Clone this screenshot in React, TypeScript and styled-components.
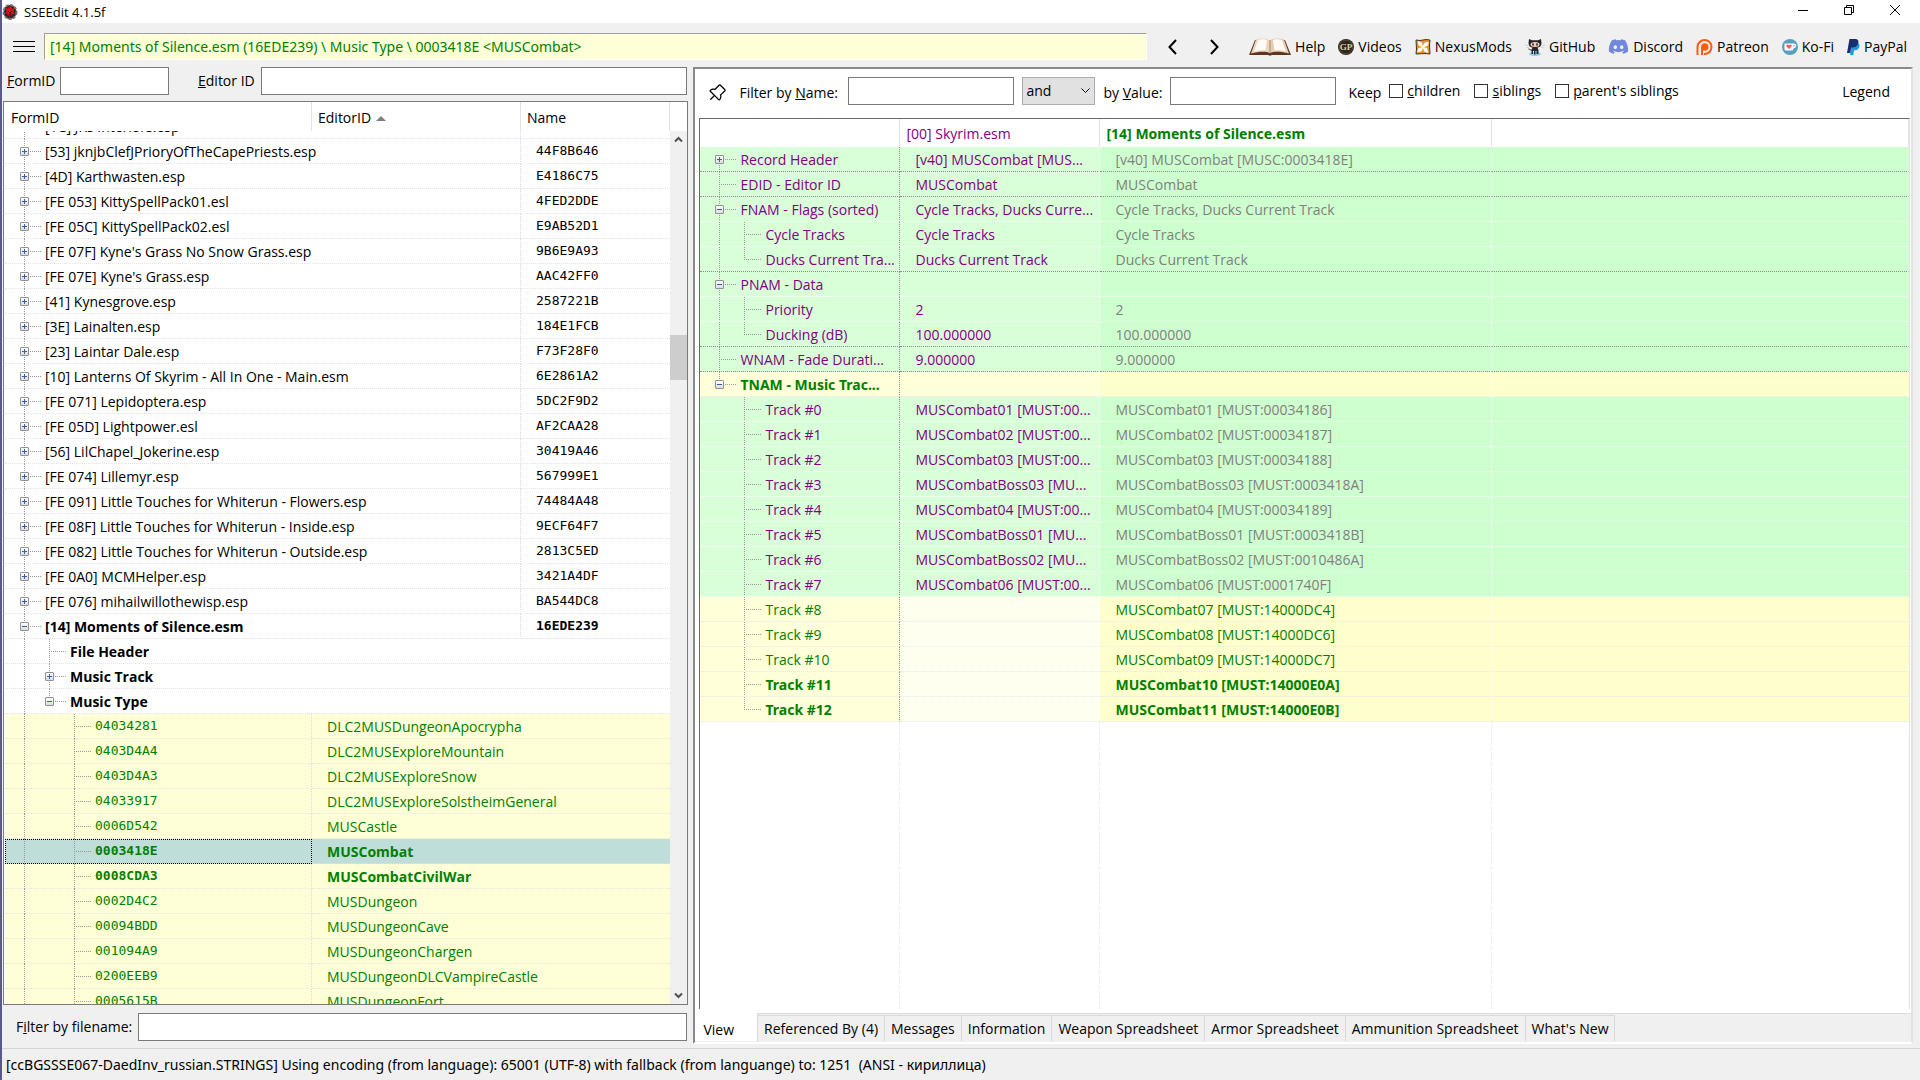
import React, { useLayoutEffect, useRef } from "react";
import styled, { createGlobalStyle, css } from "styled-components";
import { FaDiscord } from "react-icons/fa";
import { PiPushPin } from "react-icons/pi";

const UI_FONT = '"Open Sans", "Noto Sans", sans-serif';
const WIDE_FONT = '"Noto Sans", "Open Sans", sans-serif';
const MONO_FONT = '"DejaVu Sans Mono", "Liberation Mono", monospace';

const GlobalStyle = createGlobalStyle`
  * { box-sizing: border-box; }
  body { margin: 0; background: #f0f0f0; }
  button, input, select { font: inherit; color: inherit; margin: 0; }
`;

const Window = styled.div`
  display: flex;
  flex-direction: column;
  height: 100vh;
  border-left: 2px solid #5c588c;
  background: #f0f0f0;
  color: #000;
  font: 14px/20px ${UI_FONT};
  white-space: nowrap;
  overflow: hidden;
`;

/* ---------- title bar ---------- */

const TitleBar = styled.header`
  display: flex;
  align-items: center;
  height: 23px;
  padding-right: 2px;
  background: #fff;
`;
const Title = styled.h1`
  flex: 1;
  margin: 0 0 0 6px;
  font-size: 13px;
  font-weight: 400;
`;
const CaptionButton = styled.button`
  display: flex;
  align-self: flex-start;
  align-items: center;
  justify-content: center;
  width: 46px;
  height: 20px;
  padding: 0;
  border: 0;
  background: none;
`;

/* ---------- toolbar ---------- */

const Toolbar = styled.div`
  display: flex;
  align-items: center;
  height: 44px;
  padding: 3px 13px 0 10px;
`;
const IconButton = styled.button<{ $w: number }>`
  display: flex;
  flex: none;
  align-items: center;
  justify-content: center;
  width: ${(p) => p.$w}px;
  height: 24px;
  padding: 0;
  border: 0;
  background: none;
`;
const PathBox = styled.input`
  flex: 1;
  min-width: 0;
  height: 27px;
  margin: 0 16px 0 8px;
  padding: 0 5px 1px;
  border: 1px solid;
  border-color: #a0a0a0 #fff #fff #a0a0a0;
  background: #ffffd7;
  color: #008000;
  font-family: ${WIDE_FONT};
  outline: 0;
`;
const Links = styled.nav`
  display: flex;
  align-items: center;
  gap: 13px;
  margin-left: 2px;
`;
const LinkItem = styled.a`
  display: flex;
  align-items: center;
  gap: 4px;
  color: #000;
  text-decoration: none;
  svg { flex: none; display: block; }
`;

/* ---------- shared form parts ---------- */

const TextBox = styled.input<{ $w?: number }>`
  ${(p) => (p.$w ? css`width: ${p.$w}px;` : css`flex: 1; min-width: 0;`)}
  height: 28px;
  padding: 0 4px;
  border: 1px solid #7a7a7a;
  background: #fff;
  outline: 0;
`;
const FieldLabel = styled.label<{ $w?: number; $indent?: number }>`
  ${(p) => p.$w && css`width: ${p.$w}px;`}
  flex: none;
  padding-left: ${(p) => p.$indent ?? 0}px;
`;
const FilterCaption = styled(FieldLabel)`
  padding-top: 3px;
`;

/* ---------- main split ---------- */

const Main = styled.main`
  flex: 1;
  min-height: 0;
  display: grid;
  grid-template-columns: 36% minmax(0, 1fr);
`;
const LeftPane = styled.section`
  display: flex;
  flex-direction: column;
  min-height: 0;
  padding: 0 4px 0 1px;
`;
const SearchRow = styled.div`
  display: flex;
  align-items: center;
  height: 34px;
  padding: 0 1px 6px 4px;
`;
const FileFilterRow = styled(SearchRow)`
  height: 43px;
  padding: 1px 1px 0 13px;
`;
const TreeBox = styled.div`
  flex: 1;
  min-height: 0;
  display: flex;
  flex-direction: column;
  padding-left: 1px;
  border: 1px solid #7a7a7a;
  background: #fff;
`;
const TreeHead = styled.div`
  display: grid;
  grid-template-columns: 307px 209px minmax(0, 1fr);
  height: 29px;
  margin-right: 17px;
`;
const HeadButton = styled.button`
  padding: 2px 6px 0;
  border: 0;
  border-right: 1px solid #e2e2e2;
  background: none;
  text-align: left;
`;
const SortMark = styled.span`
  display: inline-block;
  margin-left: 5px;
  border: 5px solid transparent;
  border-top: 0;
  border-bottom-color: #808080;
  vertical-align: 2px;
`;
const TreeBody = styled.div`
  flex: 1;
  min-height: 0;
  display: flex;
`;
const TreeScroll = styled.div`
  flex: 1;
  min-width: 0;
  overflow: hidden;
`;
const TreeTable = styled.table`
  width: 100%;
  table-layout: fixed;
  border-collapse: separate;
  border-spacing: 0;
`;
const TreeCell = styled.td<{ $line?: boolean; $inset?: boolean; $mono?: boolean }>`
  height: 25px;
  padding: 0 0 0 ${(p) => (p.$inset ? 15 : 0)}px;
  border-bottom: 1px dotted #e4e4e4;
  ${(p) => p.$line && css`border-right: 1px dotted #d8d8e8;`}
  ${(p) => p.$inset && !p.$mono && css`padding-top: 2px;`}
  ${(p) => p.$mono && css`font-family: ${MONO_FONT}; font-size: 13px;`}
`;
const TreeRow = styled.tr<{ $record?: boolean; $selected?: boolean; $bold?: boolean }>`
  ${(p) => p.$record && css`background: #ffffd7; color: #008000;`}
  ${(p) => p.$bold && css`font-weight: 700;`}
  ${(p) => p.$selected && css`
    background: #bfdeda;
    ${TreeCell}:first-child { outline: 1px dotted #000; outline-offset: -1px; }
  `}
`;
const ScrollBar = styled.div`
  display: flex;
  flex-direction: column;
  width: 17px;
  background: #f0f0f0;
  color: #505050;
`;
const ScrollArrow = styled(IconButton)`
  height: 17px;
`;
const ScrollTrack = styled.div`
  flex: 1;
  padding-top: 187px;
`;
const ScrollThumb = styled.div`
  height: 45px;
  background: #cdcdcd;
`;

/* ---------- tree guides ---------- */

const dotsDown = "repeating-linear-gradient(to bottom, #999 0 1px, transparent 1px 2px)";
const dotsRight = "repeating-linear-gradient(to right, #999 0 1px, transparent 1px 2px)";

type Kind = "first" | "mid" | "last";

const NodeLine = styled.div`
  display: flex;
  align-items: center;
  height: 24px;
  padding-left: 7px;
`;
const Guide = styled.span<{ $on: boolean }>`
  flex: none;
  width: 25px;
  height: 25px;
  ${(p) => p.$on && css`background: ${dotsDown} 12px 0 / 1px 100% no-repeat;`}
`;
const Branch = styled.span<{ $kind: Kind }>`
  flex: none;
  display: flex;
  align-items: center;
  width: 33px;
  height: 25px;
  padding-left: 8px;
  background:
    ${dotsRight} 12px 12px / 17px 1px no-repeat,
    ${dotsDown} 12px ${(p) => (p.$kind === "first" ? "12px" : "0")} / 1px ${(p) => (p.$kind === "mid" ? "100%" : "13px")} no-repeat;
`;
const Expander = styled.button`
  display: flex;
  width: 9px;
  height: 9px;
  padding: 0;
  border: 1px solid #919191;
  border-radius: 1px;
  background: linear-gradient(#fff, #dcdcdc);
`;
const NodeText = styled.span<{ $mono?: boolean }>`
  padding-top: 2px;
  ${(p) => p.$mono && css`padding-top: 0; font-family: ${MONO_FONT}; font-size: 13px;`}
`;

function Node(props: { guides: boolean[]; kind: Kind; open?: boolean; text: string; mono?: boolean }) {
  const { guides, kind, open, text, mono } = props;
  return (
    <NodeLine>
      {guides.map((on, i) => <Guide key={i} $on={on} />)}
      <Branch $kind={kind}>
        {open !== undefined && (
          <Expander aria-label={open ? "Collapse" : "Expand"}>
            <svg width="7" height="7" viewBox="0 0 7 7" stroke="#3c5ba5">
              <path d={open ? "M1 3.5H6" : "M1 3.5H6M3.5 1V6"} />
            </svg>
          </Expander>
        )}
      </Branch>
      <NodeText $mono={mono}>{text}</NodeText>
    </NodeLine>
  );
}

/* ---------- right pane ---------- */

const RightPane = styled.section`
  display: flex;
  flex-direction: column;
  min-height: 0;
  margin: 0 7px 4px 1px;
  border: 2px solid;
  border-color: #8a8a8a #e3e3e3 #fff #8a8a8a;
`;
const ViewPage = styled.div`
  flex: 1;
  min-height: 0;
  display: flex;
  flex-direction: column;
  padding: 0 1px 4px 4px;
  background: #fff;
  border-bottom: 1px solid #d9d9d9;
`;
const FilterRow = styled.div`
  display: flex;
  align-items: center;
  height: 49px;
  padding: 0 20px 5px 6px;
`;
const PinButton = styled(IconButton)`
  margin: 4px 10px 0 0;
`;
const Combo = styled.div`
  display: grid;
  align-items: center;
  width: 73px;
  height: 28px;
  margin: 0 8px;
  border: 1px solid #adadad;
  background: #e1e1e1;
  svg { grid-area: 1 / 1; justify-self: end; margin-right: 4px; pointer-events: none; }
`;
const ComboSelect = styled.select`
  grid-area: 1 / 1;
  height: 26px;
  padding: 0 3px;
  border: 0;
  background: transparent;
  appearance: none;
`;
const Check = styled.label`
  display: flex;
  align-items: center;
  gap: 4px;
  margin-right: 14px;
`;
const CheckInput = styled.input`
  appearance: none;
  width: 14px;
  height: 14px;
  border: 1px solid #333;
  background: #fff;
`;
const Keep = styled.span`
  margin: 0 8px 0 12px;
  padding-top: 3px;
`;
const LegendButton = styled.button`
  margin-left: auto;
  padding: 2px 0 0;
  border: 0;
  background: none;
`;
const GridBox = styled.div`
  flex: 1;
  min-height: 0;
  overflow: hidden;
  border: 1px solid #696969;
  border-right-color: #e3e3e3;
  border-bottom: 0;
`;
const GridTable = styled(TreeTable)`
  height: 100%;
`;
const GridHead = styled.th<{ $tone?: string; $bold?: boolean }>`
  height: 28px;
  padding: 2px 6px 0;
  border-right: 1px solid #e2e2e2;
  color: ${(p) => p.$tone};
  ${(p) => p.$bold && css`font-family: ${WIDE_FONT};`}
  font-weight: ${(p) => (p.$bold ? 700 : 400)};
  text-align: left;
`;
type Tint = "match" | "added" | "changed";
const paleTint = { match: "#d8ffd8", added: "#ffffd9", changed: "#ffffd9" };
const fullTint = { match: "#ceffce", added: "#ffffce", changed: "#ffffce" };

const GridCell = styled.td<{ $bg: string; $line: string; $side: string; $tone?: string; $inset?: boolean }>`
  height: 25px;
  padding: ${(p) => (p.$inset ? "2px 0 0 15px" : "0")};
  overflow: hidden;
  border-right: 1px dotted ${(p) => p.$side};
  border-bottom: 1px dotted ${(p) => p.$line};
  background: ${(p) => p.$bg};
  color: ${(p) => p.$tone};
`;
const GridRow = styled.tr<{ $bold?: boolean }>`
  ${(p) => p.$bold && css`font-family: ${WIDE_FONT}; font-weight: 700;`}
`;
const FillerCell = styled.td`
  padding: 0;
  height: 100%;
  border-right: 1px dashed #ececec;
`;

const Tabs = styled.div`
  display: flex;
  height: 28px;
`;
const Tab = styled.button<{ $active?: boolean }>`
  height: 26px;
  margin-top: 1px;
  padding: 0 6px;
  border: 1px solid #d9d9d9;
  border-width: 1px 1px 0 0;
  background: #f0f0f0;
  ${(p) => p.$active && css`
    height: 28px;
    margin-top: -1px;
    padding: 5px 23px 0 8px;
    border-width: 0 1px 0 0;
    background: #fff;
  `}
`;

const StatusBar = styled.footer`
  display: flex;
  align-items: center;
  height: 32px;
  padding: 0 4px;
  border-top: 1px solid #d4d4d4;
  font-family: ${WIDE_FONT};
`;

/* ---------- data ---------- */

const files: [string, string][] = [
  ["[1C] JKs Interiors.esp", ""],
  ["[53] jknjbClefJPrioryOfTheCapePriests.esp", "44F8B646"],
  ["[4D] Karthwasten.esp", "E4186C75"],
  ["[FE 053] KittySpellPack01.esl", "4FED2DDE"],
  ["[FE 05C] KittySpellPack02.esl", "E9AB52D1"],
  ["[FE 07F] Kyne's Grass No Snow Grass.esp", "9B6E9A93"],
  ["[FE 07E] Kyne's Grass.esp", "AAC42FF0"],
  ["[41] Kynesgrove.esp", "2587221B"],
  ["[3E] Lainalten.esp", "184E1FCB"],
  ["[23] Laintar Dale.esp", "F73F28F0"],
  ["[10] Lanterns Of Skyrim - All In One - Main.esm", "6E2861A2"],
  ["[FE 071] Lepidoptera.esp", "5DC2F9D2"],
  ["[FE 05D] Lightpower.esl", "AF2CAA28"],
  ["[56] LilChapel_Jokerine.esp", "30419A46"],
  ["[FE 074] Lillemyr.esp", "567999E1"],
  ["[FE 091] Little Touches for Whiterun - Flowers.esp", "74484A48"],
  ["[FE 08F] Little Touches for Whiterun - Inside.esp", "9ECF64F7"],
  ["[FE 082] Little Touches for Whiterun - Outside.esp", "2813C5ED"],
  ["[FE 0A0] MCMHelper.esp", "3421A4DF"],
  ["[FE 076] mihailwillothewisp.esp", "BA544DC8"],
];

const groups: { text: string; kind: Kind; open?: boolean }[] = [
  { text: "File Header", kind: "mid" },
  { text: "Music Track", kind: "mid", open: false },
  { text: "Music Type", kind: "last", open: true },
];

const records: { id: string; name: string; bold?: boolean; selected?: boolean }[] = [
  { id: "04034281", name: "DLC2MUSDungeonApocrypha" },
  { id: "0403D4A4", name: "DLC2MUSExploreMountain" },
  { id: "0403D4A3", name: "DLC2MUSExploreSnow" },
  { id: "04033917", name: "DLC2MUSExploreSolstheimGeneral" },
  { id: "0006D542", name: "MUSCastle" },
  { id: "0003418E", name: "MUSCombat", bold: true, selected: true },
  { id: "0008CDA3", name: "MUSCombatCivilWar", bold: true },
  { id: "0002D4C2", name: "MUSDungeon" },
  { id: "00094BDD", name: "MUSDungeonCave" },
  { id: "001094A9", name: "MUSDungeonChargen" },
  { id: "0200EEB9", name: "MUSDungeonDLCVampireCastle" },
  { id: "0005615B", name: "MUSDungeonFort" },
];

type Field = {
  text: string; a: string; b: string; tint: Tint; kind: Kind;
  guides?: boolean[]; open?: boolean; bold?: boolean; rule?: boolean;
};
const track = (n: number, a: string, b: string, tint: Tint = "match", bold = false): Field => ({
  text: `Track #${n}`, a, b, tint, bold, kind: n === 12 ? "last" : "mid", guides: [false],
});
const fields: Field[] = [
  { text: "Record Header", a: "[v40] MUSCombat [MUS...", b: "[v40] MUSCombat [MUSC:0003418E]", tint: "match", kind: "first", open: false, rule: true },
  { text: "EDID - Editor ID", a: "MUSCombat", b: "MUSCombat", tint: "match", kind: "mid", rule: true },
  { text: "FNAM - Flags (sorted)", a: "Cycle Tracks, Ducks Curre...", b: "Cycle Tracks, Ducks Current Track", tint: "match", kind: "mid", open: true },
  { text: "Cycle Tracks", a: "Cycle Tracks", b: "Cycle Tracks", tint: "match", kind: "mid", guides: [true] },
  { text: "Ducks Current Tra...", a: "Ducks Current Track", b: "Ducks Current Track", tint: "match", kind: "last", guides: [true], rule: true },
  { text: "PNAM - Data", a: "", b: "", tint: "match", kind: "mid", open: true },
  { text: "Priority", a: "2", b: "2", tint: "match", kind: "mid", guides: [true] },
  { text: "Ducking (dB)", a: "100.000000", b: "100.000000", tint: "match", kind: "last", guides: [true], rule: true },
  { text: "WNAM - Fade Durati...", a: "9.000000", b: "9.000000", tint: "match", kind: "mid", rule: true },
  { text: "TNAM - Music Trac...", a: "", b: "", tint: "changed", kind: "last", open: true, bold: true },
  track(0, "MUSCombat01 [MUST:00...", "MUSCombat01 [MUST:00034186]"),
  track(1, "MUSCombat02 [MUST:00...", "MUSCombat02 [MUST:00034187]"),
  track(2, "MUSCombat03 [MUST:00...", "MUSCombat03 [MUST:00034188]"),
  track(3, "MUSCombatBoss03 [MU...", "MUSCombatBoss03 [MUST:0003418A]"),
  track(4, "MUSCombat04 [MUST:00...", "MUSCombat04 [MUST:00034189]"),
  track(5, "MUSCombatBoss01 [MU...", "MUSCombatBoss01 [MUST:0003418B]"),
  track(6, "MUSCombatBoss02 [MU...", "MUSCombatBoss02 [MUST:0010486A]"),
  track(7, "MUSCombat06 [MUST:00...", "MUSCombat06 [MUST:0001740F]"),
  track(8, "", "MUSCombat07 [MUST:14000DC4]", "added"),
  track(9, "", "MUSCombat08 [MUST:14000DC6]", "added"),
  track(10, "", "MUSCombat09 [MUST:14000DC7]", "added"),
  track(11, "", "MUSCombat10 [MUST:14000E0A]", "added", true),
  track(12, "", "MUSCombat11 [MUST:14000E0B]", "added", true),
];

const tabs = ["View", "Referenced By (4)", "Messages", "Information", "Weapon Spreadsheet", "Armor Spreadsheet", "Ammunition Spreadsheet", "What's New"];

/* ---------- drawings ---------- */

const AppIcon = () => (
  <svg width="16" height="20" viewBox="0 0 16 20">
    <ellipse cx="8" cy="10" rx="6.500" ry="7" fill="#2a2a2c" stroke="#77777a" strokeWidth="2" strokeDasharray="3 1.5" />
    <path d="M8 4l2.500 2.500 2-.5-1 3.500 1 2-2.500 1-2 3.500-2-3.500-2.500-1 1-2-1-3.500 2 .5z" fill="#d80f1c" />
    <path d="M6 9l2 2 2-2M8 11v4" stroke="#300" fill="none" />
  </svg>
);
const BookIcon = () => (
  <svg width="42" height="18" viewBox="0 0 42 18">
    <path d="M6 2L0 17h19l2 .800 2-.800h19L36 2z" fill="#5d3520" />
    <path d="M7 1.500C11 0 18 0 21 2.500V15C17 13 9 13.500 2 15.500z" fill="#ead5c0" />
    <path d="M35 1.500C31 0 24 0 21 2.500V15C25 13 33 13.500 40 15.500z" fill="#e4cdb6" />
    <path d="M9 2c3-1 7-1 9 0l-1.500 10.500c-4-.5-8 0-11.500 1zM33 2c-3-1-7-1-9 0l1.500 10.500c4-.5 8 0 11.500 1z" fill="#fffaf3" />
    <path d="M21 2.500v12" stroke="#c49b78" strokeWidth="1.500" />
  </svg>
);
const VideosIcon = () => (
  <svg width="16" height="16" viewBox="0 0 16 16">
    <circle cx="8" cy="8" r="8" fill="#2b2620" />
    <circle cx="8" cy="8" r="6.800" fill="none" stroke="#5a4b33" />
    <text x="8" y="11" textAnchor="middle" fontSize="9" fontWeight="700" fontFamily="Liberation Serif, serif" fill="#e2cf98">GP</text>
  </svg>
);
const NexusIcon = () => (
  <svg width="16" height="16" viewBox="0 0 16 16">
    <path d="M1 1l4 .5 6-1 4 .5-.5 5 .5 9-5-.5L1 15l.5-5z" fill="#e8902c" stroke="#4a3520" strokeWidth="1" />
    <path d="M3 2.500l3.500 1L8 8 4 6.500zM13.500 3l-1 3.500L8 8l1.500-4zM13 13.500l-3.500-1L8 8l4 1.500zM2.500 13l1-3.500L8 8l-1.500 4z" fill="#fff" stroke="#fff" strokeWidth=".6" />
  </svg>
);
const OctocatIcon = () => (
  <svg width="20" height="18" viewBox="0 0 20 18">
    <ellipse cx="10" cy="16" rx="6" ry="2" fill="#8fd0ee" />
    <path d="M4 1l3 1.200h6L16 1l.5 4c0 3-2 4.500-4 4.500l1 2.500v4h-2v-3h-1v3.500H9V13H8v3H6.500v-4l1-2.500c-2 0-4-1.500-4-4.500z" fill="#26242c" />
    <ellipse cx="10" cy="6.500" rx="4.500" ry="2.500" fill="#f1cdb8" />
    <ellipse cx="8" cy="6.500" rx=".9" ry="1.200" fill="#5a2d20" />
    <ellipse cx="12" cy="6.500" rx=".9" ry="1.200" fill="#5a2d20" />
    <path d="M0 7l3 .5M20 7l-3 .5M1 10l3-1M19 10l-3-1" stroke="#b9bcc0" strokeWidth=".6" />
    <path d="M7 12c-2 .5-2-1-3.500-1" stroke="#26242c" fill="none" />
  </svg>
);
const PatreonIcon = () => (
  <svg width="17" height="16" viewBox="0 0 17 16">
    <path d="M1.500 16V8a7 7 0 1 1 7 7H8" fill="none" stroke="#ff5c0a" strokeWidth="2" />
    <circle cx="8.800" cy="8" r="3.700" fill="#ff5c0a" />
    <path d="M6 8v8" stroke="#ff5c0a" strokeWidth="2" />
  </svg>
);
const KofiIcon = () => (
  <svg width="16" height="16" viewBox="0 0 16 16">
    <circle cx="8" cy="8" r="8" fill="#5b9fc0" />
    <path d="M2.500 4.500h9.500c3 0 3 4.500 0 4.500l-1.500 2.500H4c-1 0-1.500-.8-1.500-1.800z" fill="#fff" />
    <path d="M11.500 5.800c1.600-.2 1.600 2 0 2z" fill="#5b9fc0" />
    <path d="M7 10L4.500 7.500c-1-1.500 1.300-2.800 2.500-1.200 1.200-1.600 3.500-.3 2.500 1.200z" fill="#ff5a5f" />
  </svg>
);
const PayPalIcon = () => (
  <svg width="13" height="16" viewBox="0 0 13 16">
    <path d="M5 4h5.500c2.500.5 2.500 3.500 1 5.500-1 1.500-2.500 1.800-4.500 1.800L6.300 16H3z" fill="#1a9bdc" />
    <path d="M2.500 0H8c3.500 0 4 2.500 3 5-1 2.500-3 3.500-5.500 3.500H4.200L3.200 14H0z" fill="#14306e" />
  </svg>
);
const DiscordIcon = () => <FaDiscord size={21} color="#7289da" />;

const links: [string, React.ComponentType][] = [
  ["Help", BookIcon], ["Videos", VideosIcon], ["NexusMods", NexusIcon], ["GitHub", OctocatIcon],
  ["Discord", DiscordIcon], ["Patreon", PatreonIcon], ["Ko-Fi", KofiIcon], ["PayPal", PayPalIcon],
];

const Stroke = ({ w, h, d, weight = 1 }: { w: number; h: number; d: string; weight?: number }) => (
  <svg width={w} height={h} viewBox={`0 0 ${w} ${h}`} fill="none" stroke="currentColor" strokeWidth={weight}><path d={d} /></svg>
);

/* ---------- panes ---------- */

function PluginTree() {
  const scroller = useRef<HTMLDivElement>(null);
  useLayoutEffect(() => {
    if (scroller.current) scroller.current.scrollTop = 17;
  }, []);
  return (
    <TreeBox>
      <TreeHead>
        <HeadButton>FormID</HeadButton>
        <HeadButton>EditorID<SortMark /></HeadButton>
        <HeadButton>Name</HeadButton>
      </TreeHead>
      <TreeBody>
        <TreeScroll ref={scroller}>
          <TreeTable>
            <colgroup><col width="307" /><col width="209" /><col /></colgroup>
            <tbody>
              {files.map(([name, crc]) => (
                <TreeRow key={name}>
                  <TreeCell colSpan={2} $line><Node guides={[]} kind="mid" open={false} text={name} /></TreeCell>
                  <TreeCell $inset $mono>{crc}</TreeCell>
                </TreeRow>
              ))}
              <TreeRow $bold>
                <TreeCell colSpan={2} $line><Node guides={[]} kind="mid" open text="[14] Moments of Silence.esm" /></TreeCell>
                <TreeCell $inset $mono>16EDE239</TreeCell>
              </TreeRow>
              {groups.map((g) => (
                <TreeRow key={g.text} $bold>
                  <TreeCell colSpan={3}><Node guides={[true]} {...g} /></TreeCell>
                </TreeRow>
              ))}
              {records.map((r) => (
                <TreeRow key={r.id} $record $bold={r.bold} $selected={r.selected}>
                  <TreeCell $line><Node guides={[true, false]} kind="mid" text={r.id} mono /></TreeCell>
                  <TreeCell colSpan={2} $inset>{r.name}</TreeCell>
                </TreeRow>
              ))}
            </tbody>
          </TreeTable>
        </TreeScroll>
        <ScrollBar>
          <ScrollArrow $w={17} aria-label="Scroll up"><Stroke w={9} h={7} d="M1 5.500L4.500 2L8 5.500" weight={2} /></ScrollArrow>
          <ScrollTrack><ScrollThumb /></ScrollTrack>
          <ScrollArrow $w={17} aria-label="Scroll down"><Stroke w={9} h={7} d="M1 1.500L4.500 5L8 1.500" weight={2} /></ScrollArrow>
        </ScrollBar>
      </TreeBody>
    </TreeBox>
  );
}

function RecordGrid() {
  return (
    <GridBox>
      <GridTable>
        <colgroup><col width="200" /><col width="200" /><col width="392" /><col /></colgroup>
        <thead>
          <tr>
            <GridHead />
            <GridHead $tone="#800080">[00] Skyrim.esm</GridHead>
            <GridHead $tone="#008000" $bold>[14] Moments of Silence.esm</GridHead>
            <GridHead />
          </tr>
        </thead>
        <tbody>
          {fields.map((f) => {
            const match = f.tint === "match";
            const line = f.rule ? "#8c8c8c" : match ? "#ffffff" : "#e6e6f0";
            const pale = paleTint[f.tint];
            const full = fullTint[f.tint];
            return (
              <GridRow key={f.text} $bold={f.bold}>
                <GridCell $bg={pale} $line={line} $side="#8c8c8c" $tone={match ? "#800080" : "#008000"}>
                  <Node guides={f.guides ?? []} kind={f.kind} open={f.open} text={f.text} />
                </GridCell>
                <GridCell $bg={f.tint === "added" ? "#fffff0" : pale} $line={line} $side="#ffffff" $tone="#800080" $inset>{f.a}</GridCell>
                <GridCell $bg={full} $line={line} $side="#ffffff" $tone={match ? "#808080" : "#008000"} $inset>{f.b}</GridCell>
                <GridCell $bg={full} $line={line} $side={full} />
              </GridRow>
            );
          })}
          <tr><FillerCell /><FillerCell /><FillerCell /><td /></tr>
        </tbody>
      </GridTable>
    </GridBox>
  );
}

export default function App() {
  return (
    <Window>
      <GlobalStyle />
      <TitleBar>
        <AppIcon />
        <Title>SSEEdit 4.1.5f</Title>
        <CaptionButton aria-label="Minimize"><Stroke w={10} h={10} d="M0 5.500H10" /></CaptionButton>
        <CaptionButton aria-label="Restore"><Stroke w={10} h={10} d="M.5 2.500H7.500V9.500H.5ZM2.500 2.500V.5H9.500V7.500H7.500" /></CaptionButton>
        <CaptionButton aria-label="Close"><Stroke w={10} h={10} d="M0 0L10 10M10 0L0 10" /></CaptionButton>
      </TitleBar>
      <Toolbar>
        <IconButton $w={24} aria-label="Menu"><Stroke w={22} h={12} d="M0 .5H22M0 5.500H22M0 10.500H22" /></IconButton>
        <PathBox aria-label="Path" readOnly value={"[14] Moments of Silence.esm (16EDE239) \\ Music Type \\ 0003418E <MUSCombat>"} />
        <IconButton $w={18} aria-label="Back"><Stroke w={9} h={16} d="M8 1L1.500 8L8 15" weight={2} /></IconButton>
        <IconButton $w={66} aria-label="Forward"><Stroke w={9} h={16} d="M1 1L7.500 8L1 15" weight={2} /></IconButton>
        <Links>
          {links.map(([name, Icon]) => <LinkItem key={name} href="#"><Icon />{name}</LinkItem>)}
        </Links>
      </Toolbar>
      <Main>
        <LeftPane>
          <SearchRow>
            <FieldLabel htmlFor="formid" $w={53}><u>F</u>ormID</FieldLabel>
            <TextBox id="formid" $w={109} />
            <FieldLabel htmlFor="editorid" $w={92} $indent={29}><u>E</u>ditor ID</FieldLabel>
            <TextBox id="editorid" />
          </SearchRow>
          <PluginTree />
          <FileFilterRow>
            <FieldLabel htmlFor="filename" $w={122}>F<u>i</u>lter by filename:</FieldLabel>
            <TextBox id="filename" />
          </FileFilterRow>
        </LeftPane>
        <RightPane>
          <ViewPage>
            <FilterRow>
              <PinButton $w={24} aria-label="Pin"><PiPushPin size={20} /></PinButton>
              <FilterCaption htmlFor="byname" $w={109}>Filter by <u>N</u>ame:</FilterCaption>
              <TextBox id="byname" $w={166} />
              <Combo>
                <ComboSelect aria-label="Operator" defaultValue="and"><option>and</option><option>or</option></ComboSelect>
                <Stroke w={9} h={6} d="M.5 .5L4.500 4.500L8.500 .5" />
              </Combo>
              <FilterCaption htmlFor="byvalue" $w={67}>by <u>V</u>alue:</FilterCaption>
              <TextBox id="byvalue" $w={166} />
              <Keep>Keep</Keep>
              <Check><CheckInput type="checkbox" /><span><u>c</u>hildren</span></Check>
              <Check><CheckInput type="checkbox" /><span><u>s</u>iblings</span></Check>
              <Check><CheckInput type="checkbox" /><span><u>p</u>arent's siblings</span></Check>
              <LegendButton>Legend</LegendButton>
            </FilterRow>
            <RecordGrid />
          </ViewPage>
          <Tabs role="tablist">
            {tabs.map((t, i) => <Tab key={t} role="tab" $active={i === 0}>{t}</Tab>)}
          </Tabs>
        </RightPane>
      </Main>
      <StatusBar>[ccBGSSSE067-DaedInv_russian.STRINGS] Using encoding (from language): 65001 (UTF-8) with fallback (from languange) to: 1251&nbsp; (ANSI - кириллица)</StatusBar>
    </Window>
  );
}
